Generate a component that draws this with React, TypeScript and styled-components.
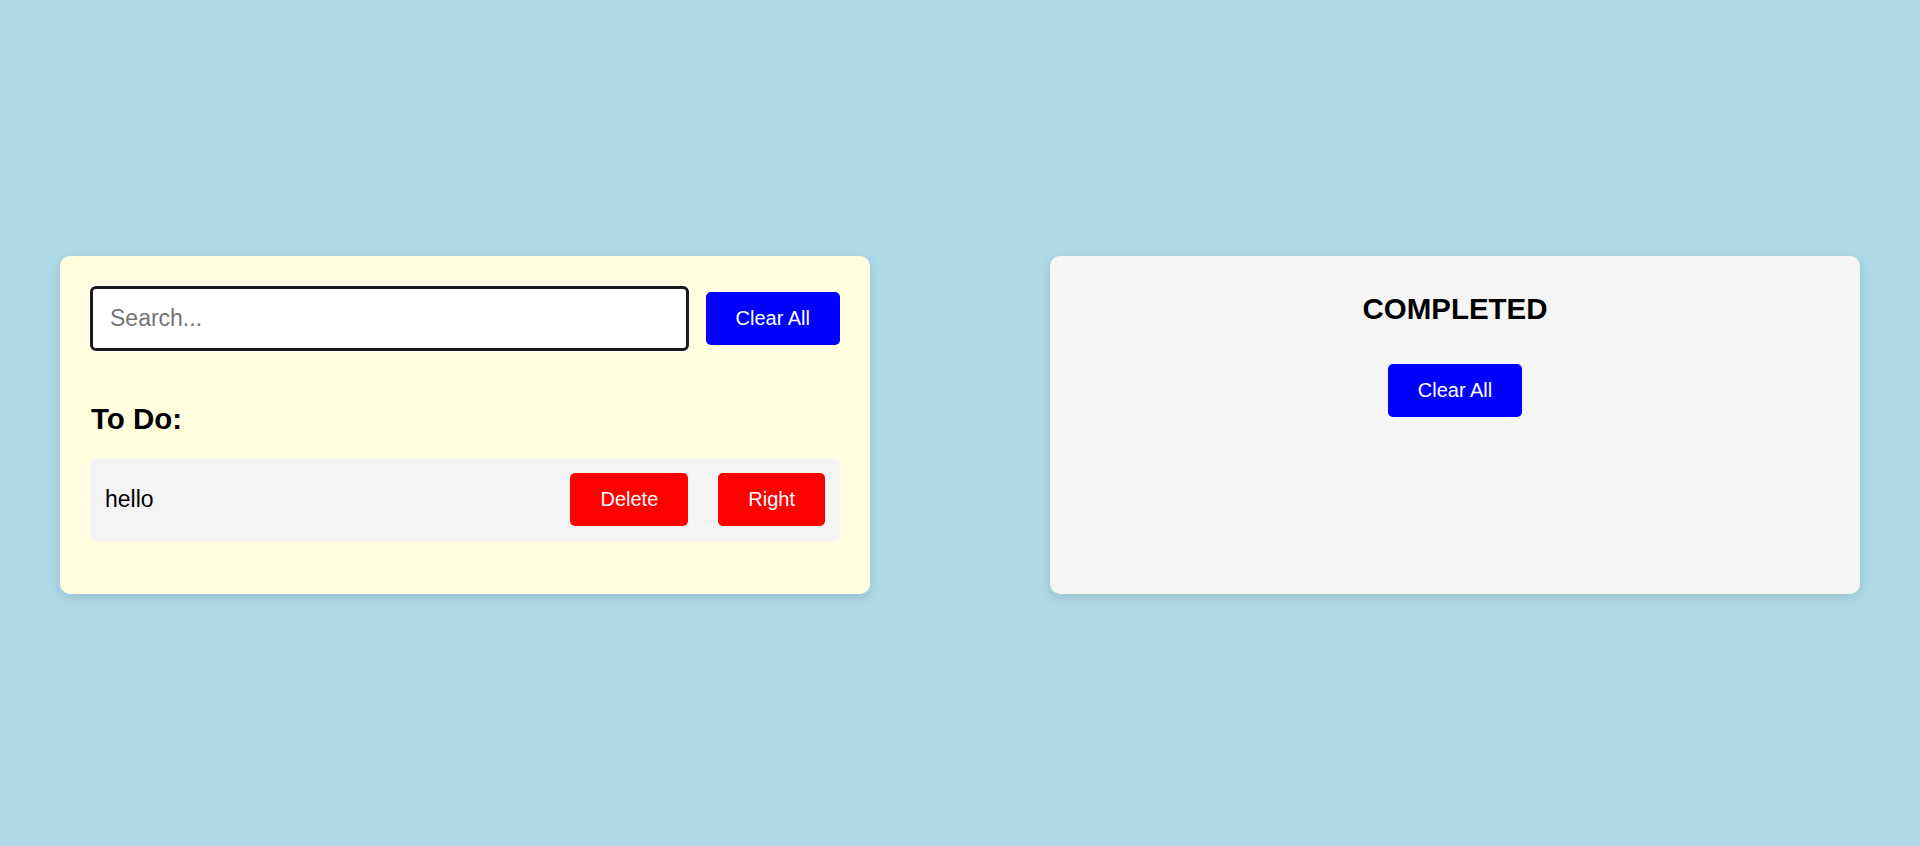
import * as React from 'react'
import styled, { createGlobalStyle } from 'styled-components'

const GlobalStyle = createGlobalStyle`
  * {
    box-sizing: border-box;
  }
  body {
    margin: 0;
    background: #add8e6;
    font-family: "Liberation Sans", Arial, sans-serif;
    color: #000;
  }
`

const Board = styled.div`
  min-height: 100vh;
  display: flex;
  align-items: center;
  padding: 4px 60px 0;
`

const Columns = styled.div`
  display: flex;
  gap: 180px;
  width: 100%;
  align-items: stretch;
`

const Column = styled.section<{ $tone: string; $center?: boolean }>`
  flex: 1;
  background: ${p => p.$tone};
  border-radius: 10px;
  padding: 30px;
  box-shadow: 0 4px 12px rgba(0, 0, 0, 0.1);
  text-align: ${p => (p.$center ? 'center' : 'left')};
`

const SearchRow = styled.div`
  display: flex;
  align-items: center;
  gap: 17px;
`

const SearchInput = styled.input`
  flex: 1;
  height: 65px;
  padding: 0 17px;
  border: 3px solid #1a1a1a;
  border-radius: 6px;
  box-shadow: 0 0 0 1px #fff;
  font-family: inherit;
  font-size: 23px;
  background: #fff;
  outline: none;
  &::placeholder {
    color: #757575;
  }
`

const Button = styled.button<{ $variant?: 'blue' | 'red' }>`
  border: none;
  border-radius: 5px;
  padding: 15px 30px;
  font-family: inherit;
  font-size: 20px;
  line-height: 23px;
  color: #fff;
  background: ${p => (p.$variant === 'red' ? '#ff0000' : '#0000ff')};
  cursor: pointer;
`

const Heading = styled.h2`
  font-size: 29.5px;
  font-weight: bold;
  margin: 51px 0 22px 1px;
`

const CompletedHeading = styled(Heading)`
  margin: 6px 0 38px;
`

const TaskRow = styled.div`
  display: flex;
  align-items: center;
  background: #f4f4f4;
  border-radius: 6px;
  padding: 15px;
  margin-bottom: 23px;
  .title {
    flex: 1;
    font-size: 23px;
  }
  .actions {
    display: flex;
    gap: 30px;
  }
`

const todos = ['hello']

export default function App() {
  return (
    <Board>
      <GlobalStyle />
      <Columns>
        <Column $tone="#ffffe0">
          <SearchRow>
            <SearchInput placeholder="Search..." />
            <Button>Clear All</Button>
          </SearchRow>
          <Heading>To Do:</Heading>
          {todos.map(t => (
            <TaskRow key={t}>
              <div className="title">{t}</div>
              <div className="actions">
                <Button $variant="red">Delete</Button>
                <Button $variant="red">Right</Button>
              </div>
            </TaskRow>
          ))}
        </Column>
        <Column $tone="#f5f5f5" $center>
          <CompletedHeading>COMPLETED</CompletedHeading>
          <Button>Clear All</Button>
        </Column>
      </Columns>
    </Board>
  )
}
